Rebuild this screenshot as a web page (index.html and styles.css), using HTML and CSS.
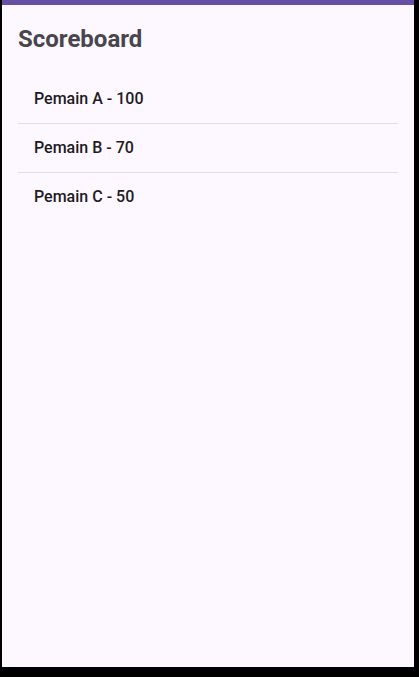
FILE: index.html
```html
<!DOCTYPE html>
<html>
<head>
<meta charset="utf-8">
<link rel="stylesheet" href="styles.css">
</head>
<body>
<div class="screen">
  <div class="statusbar"></div>
  <div class="content">
    <h1 class="title">Scoreboard</h1>
    <ul class="list">
      <li class="row">Pemain A - 100</li>
      <li class="row">Pemain B - 70</li>
      <li class="row">Pemain C - 50</li>
    </ul>
  </div>
</div>
</body>
</html>
```
FILE: styles.css
```css
html, body {
  margin: 0;
  padding: 0;
  background: #000;
}
body {
  width: 419px;
  height: 677px;
  overflow: hidden;
}
.screen {
  margin-left: 2px;
  width: 412px;
  height: 667px;
  background: #fdf7ff;
  display: flex;
  flex-direction: column;
  font-family: Roboto, "Noto Sans", sans-serif;
}
.statusbar {
  height: 5px;
  background: #6750a4;
  flex: none;
}
.content {
  padding: 17.5px 16px 0 16px;
}
.title {
  margin: 0;
  font-size: 24px;
  line-height: 32px;
  font-weight: 700;
  color: #48464c;
}
.list {
  list-style: none;
  margin: 20px 0 0 0;
  padding: 0;
}
.row {
  padding: 12px 16px;
  font-size: 16px;
  line-height: 24px;
  font-weight: 500;
  color: #1d1b20;
  border-bottom: 1px solid #e3dee6;
}
.row:last-child {
  border-bottom: none;
}
```
